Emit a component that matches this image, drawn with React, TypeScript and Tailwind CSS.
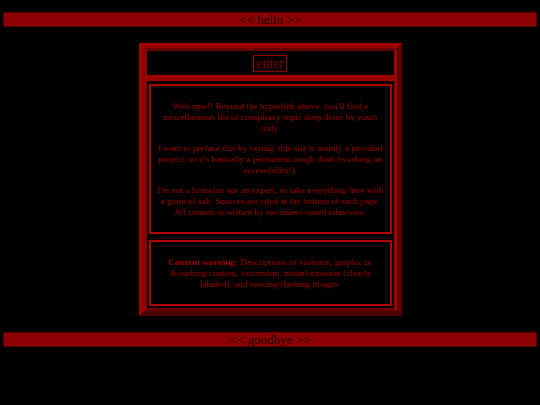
export default function App() {
  return (
    <div className="min-h-[405px] bg-black pt-[12px] font-['Liberation_Serif',serif]">
      <div className="mx-[3px] flex h-[15px] items-center justify-center border border-[#5a0000] bg-[#8b0000] text-[13px] leading-none text-[#220000]">
        &lt;&lt; hello &gt;&gt;
      </div>
      <div className="mx-auto mt-[16px] w-[263px] border-[5px] border-t-[#9c0000] border-l-[#9c0000] border-r-[#5c0000] border-b-[#4a0000]">
        <div className="flex h-[30px] items-center justify-center border-[3px] border-t-[#6a0000] border-l-[#8b0000] border-r-[#9c0000] border-b-[#9c0000]">
          <span className="border border-[#8b0000] px-[2px] text-[14px] leading-[15px] text-[#7a0000]">enter</span>
        </div>
        <div className="flex flex-col gap-[6px] border-[3px] border-t-[#9c0000] border-l-[#8b0000] border-r-[#9c0000] border-b-[#6a0000] px-[2px] pt-[3px] pb-[2px]">
          <div className="flex h-[150px] flex-col justify-center gap-[9px] border-2 border-[#b00000] px-[4px] text-center text-[9.2px] leading-[11px] text-[#990000]">
            <p>Welcome!! Beyond the hyperlink above, you'll find a miscellaneous list of conspiracy-topic deep dives by yours truly.</p>
            <p>I want to preface this by saying: this site is mainly a personal project, so it's basically a permanent rough draft (working on accessibility!).</p>
            <p>I'm not a historian nor an expert, so take everything here with a grain of salt. Sources are cited at the bottom of each page. All content is written by me unless stated otherwise.</p>
          </div>
          <div className="flex h-[66px] flex-col justify-center border-2 border-[#b00000] px-[12px] text-center text-[9.2px] leading-[11px] text-[#990000]">
            <p><b>Content warning:</b> Descriptions of violence, graphic or disturbing content, extremism, misinformation (clearly labeled), and moving/flashing images.</p>
          </div>
        </div>
      </div>
      <div className="mx-[3px] mt-[16px] flex h-[15px] items-center justify-center border border-[#5a0000] bg-[#8b0000] text-[13px] leading-none text-[#220000]">
        &lt;&lt; goodbye &gt;&gt;
      </div>
    </div>
  );
}
